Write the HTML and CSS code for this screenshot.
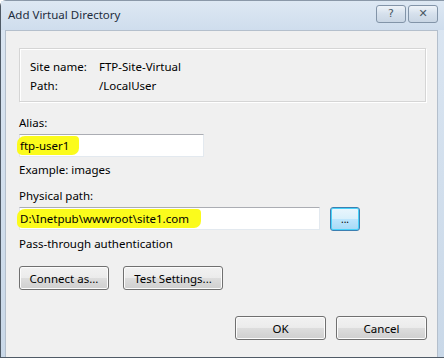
FILE: index.html
```html
<!DOCTYPE html>
<html lang="en">
<head>
  <meta charset="UTF-8" />
  <title>Add Virtual Directory</title>
  <link rel="stylesheet" href="styles.css">
</head>
<body>
  <div class="window">
    <div class="titlebar">
      <span class="title">Add Virtual Directory</span>
      <div class="caption-buttons">
        <button class="cap-btn">?</button>
        <button class="cap-btn">&#x2715;</button>
      </div>
    </div>

    <div class="client">
      <div class="info-box">
        <div class="info-row"><span class="info-label">Site name:</span><span>FTP-Site-Virtual</span></div>
        <div class="info-row"><span class="info-label">Path:</span><span>/LocalUser</span></div>
      </div>

      <div class="field">
        <label class="field-label">Alias:</label>
        <div class="textbox alias-box"><span class="marker">ftp-user1</span></div>
        <div class="hint">Example: images</div>
      </div>

      <div class="field path-field">
        <label class="field-label">Physical path:</label>
        <div class="path-row">
          <div class="textbox path-box"><span class="marker">D:\Inetpub\wwwroot\site1.com</span></div>
          <button class="btn browse-btn">...</button>
        </div>
        <div class="hint">Pass-through authentication</div>
      </div>

      <div class="auth-buttons">
        <button class="btn connect-btn">Connect as...</button>
        <button class="btn test-btn">Test Settings...</button>
      </div>

      <div class="dialog-buttons">
        <button class="btn dlg-btn">OK</button>
        <button class="btn dlg-btn">Cancel</button>
      </div>
    </div>
  </div>
</body>
</html>
```

FILE: styles.css
```css
html, body {
  margin: 0;
  padding: 0;
}
body {
  font-family: "Noto Sans", "Open Sans", sans-serif;
  font-size: 11.5px;
  color: #000;
  background: #ffffff;
}
.window {
  width: 444px;
  height: 358px;
  box-sizing: border-box;
  border-left: 1px solid #4f5a66;
  border-bottom: 1px solid #4f5a66;
  border-top: 1px solid #8a98a8;
  background: linear-gradient(180deg, #dbe6f2 0%, #c9d8e8 100%);
  display: flex;
  flex-direction: column;
  border-top-left-radius: 6px;
}
.titlebar {
  height: 29px;
  display: flex;
  align-items: flex-start;
  justify-content: space-between;
  padding: 0 6px 0 7px;
  background: linear-gradient(180deg, #dde8f3 0%, #cfdded 100%);
}
.title {
  margin-top: 6px;
  font-size: 11.5px;
  color: #1e2d3d;
}
.caption-buttons {
  display: flex;
  gap: 2px;
  margin-top: 4px;
}
.cap-btn {
  width: 30px;
  height: 18px;
  padding: 0;
  border: 1px solid #8294a8;
  border-radius: 3px;
  background: linear-gradient(180deg, #eef3f8 0%, #d5e0ec 50%, #c9d6e4 100%);
  color: #4a5866;
  font-family: "DejaVu Sans", sans-serif;
  font-size: 11px;
  line-height: 16px;
}
.client {
  flex: 1;
  margin: 0 6px 0 4px;
  background: #f0f0f0;
  border: 1px solid #b4bfcc;
  border-bottom: none;
  padding: 17px 10px 0 13px;
  display: flex;
  flex-direction: column;
}
.info-box {
  width: 407px;
  height: 54px;
  box-sizing: border-box;
  border: 1px solid #d5d5d5;
  box-shadow: inset 1px 1px 0 #ffffff, 1px 1px 0 #ffffff;
  padding: 9px 10px 8px 10px;
  display: flex;
  flex-direction: column;
  gap: 2px;
}
.info-row {
  display: flex;
  line-height: 17px;
}
.info-label {
  width: 69px;
}
.field {
  display: flex;
  flex-direction: column;
  margin-top: 12px;
}
.path-field {
  margin-top: 9px;
}
.field-label {
  line-height: 17px;
}
.textbox {
  height: 23px;
  box-sizing: border-box;
  background: #ffffff;
  border: 1px solid #abadb3;
  border-color: #abadb3 #e3e9ef #e3e9ef #e2e3ea;
  display: flex;
  align-items: center;
  margin-top: 3px;
}
.alias-box {
  width: 185px;
}
.path-box {
  width: 301px;
}
.marker {
  background: #fbfb1c;
  border-radius: 8px 4px 7px 5px;
  padding: 2px 10px 2px 3px;
  margin-left: -3px;
}
.path-box .marker {
  padding-right: 12px;
}
.hint {
  line-height: 17px;
  margin-top: 4px;
}
.path-row {
  display: flex;
  align-items: flex-start;
  gap: 10px;
}
.btn {
  font-family: "Noto Sans", "Open Sans", sans-serif;
  font-size: 11.5px;
  color: #000;
  height: 24px;
  padding: 0;
  border: 1px solid #707070;
  border-radius: 3px;
  background: linear-gradient(180deg, #f2f2f2 0%, #ebebeb 50%, #dddddd 51%, #cfcfcf 100%);
  box-shadow: inset 0 0 0 1px #fcfcfc;
}
.browse-btn {
  width: 30px;
  margin-top: 3px;
  border-color: #3c7fb1;
  background: linear-gradient(180deg, #eaf6fd 0%, #d9f0fc 50%, #bee6fd 51%, #a7d9f5 100%);
  font-size: 10px;
  box-shadow: inset 0 0 0 1px #48d2fa;
}
.auth-buttons {
  display: flex;
  gap: 14px;
  margin-top: 14px;
}
.connect-btn {
  width: 90px;
}
.test-btn {
  width: 100px;
}
.dialog-buttons {
  display: flex;
  justify-content: flex-end;
  gap: 10px;
  margin-top: 26px;
  width: 408px;
}
.dlg-btn {
  width: 91px;
}
```
